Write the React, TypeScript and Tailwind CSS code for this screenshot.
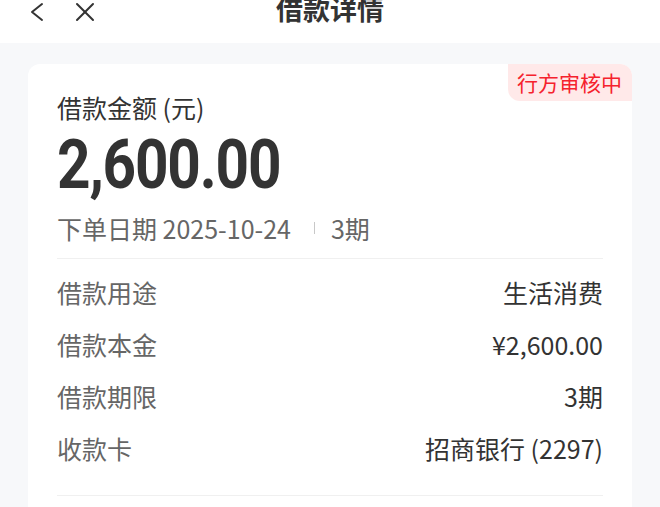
const rows = [
  { label: "借款用途", value: "生活消费" },
  { label: "借款本金", value: "¥2,600.00" },
  { label: "借款期限", value: "3期" },
  { label: "收款卡", value: "招商银行 (2297)" },
];

const cjk = { fontFamily: '"Noto Sans CJK SC", "Noto Sans", sans-serif' };

export default function App() {
  return (
    <div className="w-[660px] h-[507px] overflow-hidden bg-[#f7f8fa]" style={cjk}>
      {/* Header */}
      <header className="h-[43px] bg-white">
        <div className="relative h-[23px] flex items-center pl-[28px] text-[#333]">
          <svg width="18" height="20" viewBox="0 0 18 20" fill="none" stroke="#333" strokeWidth="2" strokeLinecap="round" strokeLinejoin="round">
            <polyline points="14,2 4,10 14,18" />
          </svg>
          <svg className="ml-[29px]" width="20" height="20" viewBox="0 0 20 20" fill="none" stroke="#333" strokeWidth="2" strokeLinecap="round">
            <line x1="2" y1="2" x2="18" y2="18" />
            <line x1="18" y1="2" x2="2" y2="18" />
          </svg>
          <h1 className="absolute left-0 right-0 text-center text-[27px] font-bold leading-none -mt-[6px] pointer-events-none">
            借款详情
          </h1>
        </div>
      </header>

      {/* Card */}
      <div className="pt-[21px] pl-[28px] pr-[28px]">
        <div className="relative bg-white rounded-[12px] px-[29px] pt-[26px]">
          <span className="absolute top-0 right-0 h-[37px] pl-[9px] pr-[10px] flex items-center bg-[#ffe9e9] text-[#f5222d] text-[21px] rounded-tr-[12px] rounded-bl-[12px]">
            行方审核中
          </span>

          <div className="text-[25px] leading-[34px] text-[#333]">借款金额 (元)</div>
          <div
            className="mt-[6px] inline-block origin-left scale-x-[0.86] text-[68px] font-bold leading-[70px] text-[#333] tracking-[-0.02em]"
            style={{ fontFamily: 'Roboto, "Noto Sans", sans-serif' }}
          >
            2,600.00
          </div>
          <div className="mt-[11px] flex items-center text-[25px] leading-[34px] text-[#666]">
            <span>下单日期 2025-10-24</span>
            <span className="ml-[23px] mr-[16px] w-px h-[12px] bg-[#c8c8c8]" />
            <span>3期</span>
          </div>

          <div className="mt-[13px] border-t border-[#f0f0f0] pt-[8px] pb-[20px] flex flex-col">
            {rows.map((r) => (
              <div key={r.label} className="h-[52px] flex items-center justify-between text-[25px]">
                <span className="text-[#666]">{r.label}</span>
                <span className="text-[#333]">{r.value}</span>
              </div>
            ))}
          </div>
          <div className="border-t border-[#f0f0f0] h-[40px]" />
        </div>
      </div>
    </div>
  );
}
